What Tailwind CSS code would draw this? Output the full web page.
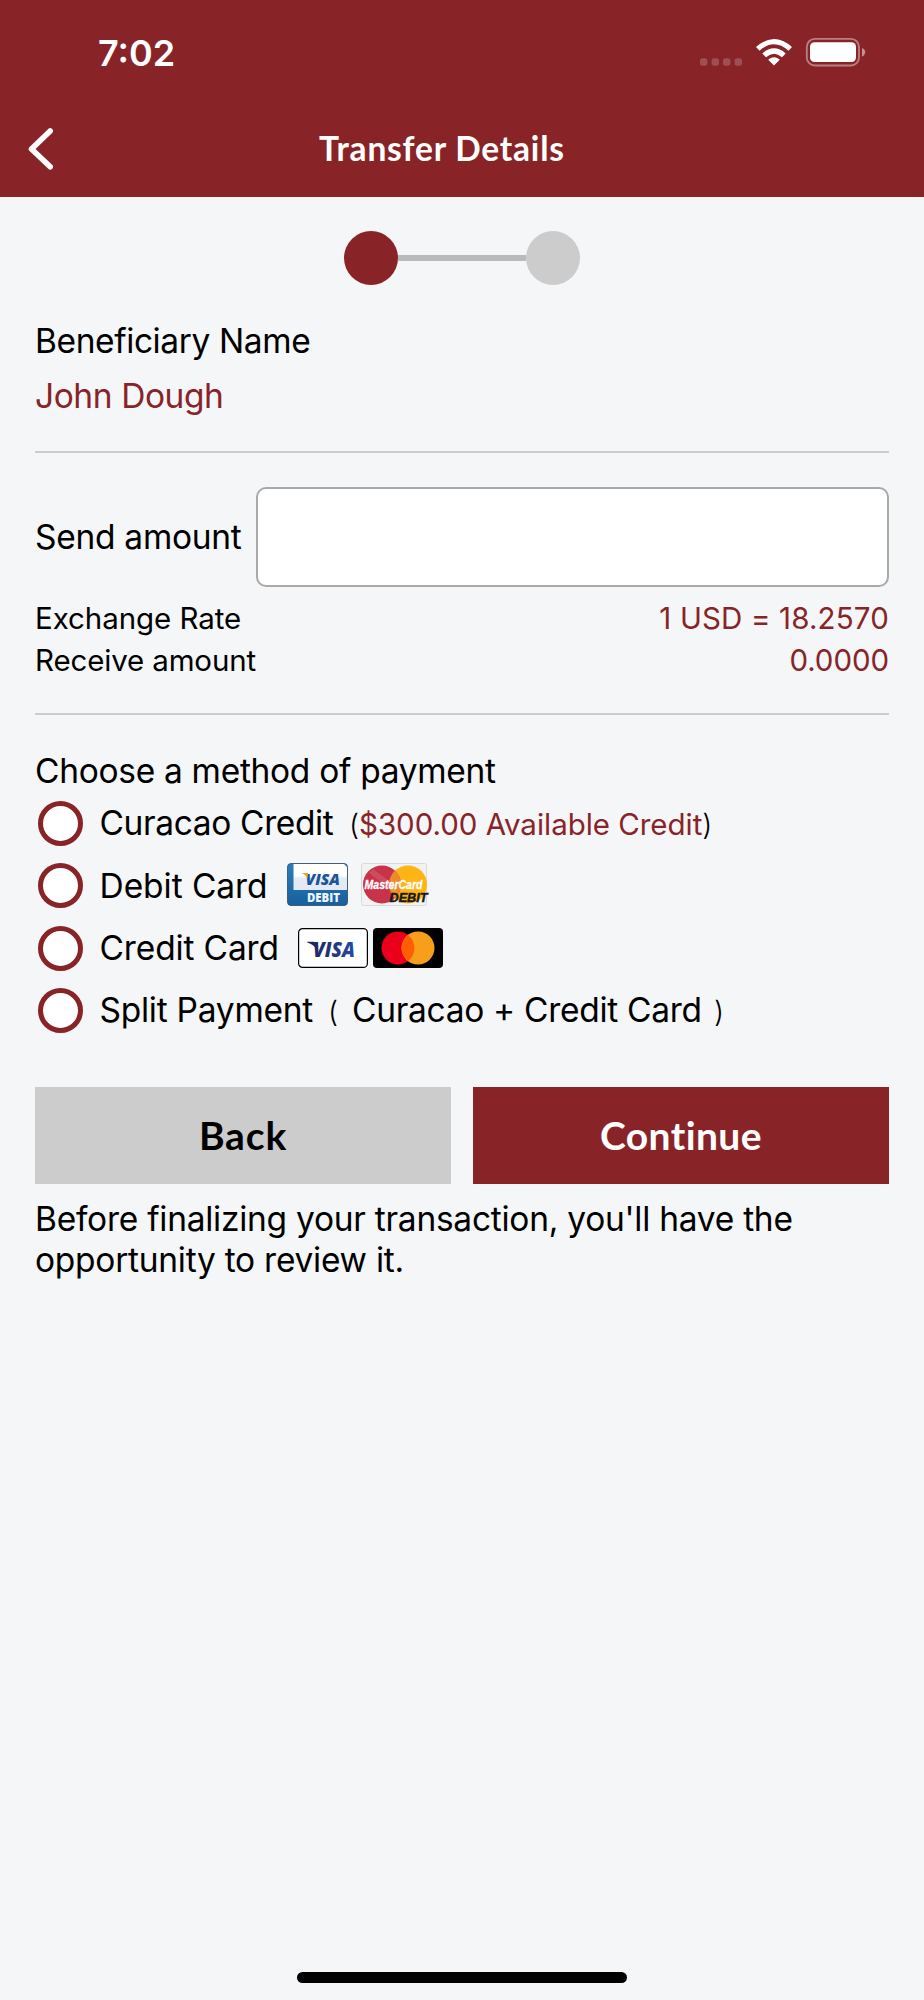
<!DOCTYPE html>
<html lang="en">
<head>
<meta charset="utf-8">
<title>Transfer Details</title>
<script src="https://cdn.jsdelivr.net/npm/@tailwindcss/browser@4"></script>
</head>
<body class="bg-[#f5f6f8] text-black font-['Inter',sans-serif] text-[33.5px] whitespace-nowrap">
<div class="w-[924px] h-[2000px] flex flex-col overflow-hidden">
  <header class="h-[197px] shrink-0 bg-[#882428] text-white">
    <div class="h-[106px] pl-[98px] pr-[58px] flex items-center justify-between">
      <span class="text-[36px] leading-[40px] font-semibold">7:02</span>
      <svg class="w-[166px] h-[30px] mt-[-2px]" viewBox="700 37 166 30" fill="#fff">
        <g fill-opacity=".2">
          <rect x="700" y="58.3" width="7.4" height="7.4" rx="2.6"/><rect x="711.6" y="58.3" width="7.4" height="7.4" rx="2.6"/><rect x="723" y="58.3" width="7.4" height="7.4" rx="2.6"/><rect x="734.6" y="58.3" width="7.4" height="7.4" rx="2.6"/>
        </g>
        <path d="M774 65.6L768.5 60Q768.2 59.4 769 58.9Q774 55.5 779 58.9Q779.8 59.4 779.5 60Z"/>
        <path d="M762.3 53.4Q774 43.2 785.7 53.4L782 57.2Q774 50.2 766 57.2Z"/>
        <path d="M756 47Q774 31 792 47L788.5 50.7Q774 37.8 759.5 50.7Z"/>
        <rect x="806.8" y="38.9" width="52.2" height="26.6" rx="8" fill="none" stroke="#fff" stroke-opacity=".42" stroke-width="1.8"/>
        <rect x="810" y="42.3" width="46" height="19.8" rx="4.5"/>
        <path d="M862 48Q865.2 49.5 865.2 52.3T862 56.8Z" fill-opacity=".5"/>
      </svg>
    </div>
    <div class="h-[83px] grid grid-cols-[319px_1fr] items-center">
      <svg class="ml-[26px] mt-[3px] w-[30px] h-[44px]" viewBox="26 127 30 44" fill="none" stroke="#fff" stroke-width="5.6" stroke-linecap="round" stroke-linejoin="round"><path d="M50.2 131L31.5 149L50.2 166.8"/></svg>
      <h1 class="font-['Lato',sans-serif] font-bold text-[33.5px] leading-[40px] tracking-[0.8px]">Transfer Details</h1>
    </div>
  </header>

  <main class="px-[35px] pt-[34px] flex flex-col">
    <div class="flex items-center justify-center h-[54px]">
      <div class="size-[54px] rounded-full bg-[#882428]"></div>
      <div class="w-[127.5px] h-[6px] bg-[#bababa]"></div>
      <div class="size-[54px] rounded-full bg-[#ccc]"></div>
    </div>

    <div class="mt-[29px] leading-[54px] tracking-[-0.4px]">Beneficiary Name</div>
    <div class="leading-[56px] tracking-[-0.42px] text-[#882428]">John Dough</div>
    <div class="mt-[27px] h-[2px] bg-[#ccc]"></div>

    <div class="mt-[34px] h-[100px] flex items-center">
      <label for="amt" class="w-[221px] tracking-[-0.28px]">Send amount</label>
      <input id="amt" class="flex-1 h-[100px] bg-white border-2 border-[#a9a9a9] rounded-[10px]">
    </div>
    <div class="mt-[10px] flex justify-between text-[29.5px] leading-[42px]">
      <span class="tracking-[-0.07px]">Exchange Rate</span><span class="text-[#882428] tracking-[0.15px]">1 USD = 18.2570</span>
    </div>
    <div class="flex justify-between text-[29.5px] leading-[42px]">
      <span class="tracking-[-0.15px]">Receive amount</span><span class="text-[#882428] tracking-[-0.08px]">0.0000</span>
    </div>
    <div class="mt-[32px] h-[2px] bg-[#ccc]"></div>

    <div class="mt-[35px] leading-[42px] tracking-[-0.3px]">Choose a method of payment</div>

    <div class="pl-[3px] flex flex-col leading-[42px]">
      <div class="h-[62.5px] flex items-center gap-[16.5px]">
        <div class="size-[45px] rounded-full border-5 border-[#882428] bg-white"></div>
        <div class="flex items-baseline pt-[1px]">
          <span class="w-[249.5px] tracking-[-0.37px]">Curacao Credit</span>
          <span class="text-[29.5px]"><span class="inline-block w-[10px] font-light text-[29px]">(</span><span class="text-[#882428] tracking-[-0.03px]">$300.00 Available Credit</span><span class="font-light text-[29px]">)</span></span>
        </div>
      </div>
      <div class="h-[62.5px] flex items-center gap-[16.5px]">
        <div class="size-[45px] rounded-full border-5 border-[#882428] bg-white"></div>
        <div class="flex items-center">
          <span class="w-[187.5px] tracking-[-0.05px]">Debit Card</span>
          <svg class="w-[142px] h-[43px] mt-[-3px] overflow-visible" viewBox="0 0 142 43">
            <defs>
              <linearGradient id="vd" x1="0" y1="0" x2="0" y2="1"><stop offset="0" stop-color="#2c7fb8"/><stop offset="1" stop-color="#16609f"/></linearGradient>
              <linearGradient id="vw" x1="0" y1="0" x2="0" y2="1"><stop offset=".45" stop-color="#fff"/><stop offset=".55" stop-color="#e3eaf4"/></linearGradient>
            </defs>
            <rect x=".5" y=".5" width="60" height="42" rx="3.5" fill="url(#vd)" stroke="#34495c" stroke-opacity=".8"/>
            <path d="M6.500 1H57L60 4V27H6.500Z" fill="url(#vw)"/>
            <text x="18.5" y="21.8" textLength="34.5" lengthAdjust="spacingAndGlyphs" font-family="Open Sans, sans-serif" font-weight="800" font-style="italic" font-size="16.5" fill="#1b5596">VISA</text>
            <path d="M14.500 10H21L20.500 15.500Q18 11 14.500 10Z" fill="#f3a51c"/>
            <text x="20" y="39" textLength="33" lengthAdjust="spacingAndGlyphs" font-family="Open Sans, sans-serif" font-weight="800" font-size="11.5" fill="#eef6fc">DEBIT</text>
            <rect x="74.5" y=".5" width="65" height="42" rx="2" fill="#f3f2f2" stroke="#d9d9d9"/>
            <circle cx="121" cy="21.5" r="19" fill="#fdb515"/>
            <circle cx="95" cy="21.5" r="19" fill="#c8334a"/>
            <path d="M108 7.600a19 19 0 0 1 0 27.800a19 19 0 0 1 0-27.800Z" fill="#ec8a2e"/>
            <path d="M86 6L110 24L108 30L82 10Z" fill="#fff" fill-opacity=".12"/>
            <text x="77.5" y="25.500" textLength="58" lengthAdjust="spacingAndGlyphs" font-family="Liberation Sans, sans-serif" font-weight="700" font-style="italic" font-size="13" fill="#fff" stroke="#fff" stroke-width=".3">MasterCard</text>
            <text x="102.5" y="38.5" textLength="38" lengthAdjust="spacingAndGlyphs" font-family="Liberation Sans, sans-serif" font-weight="700" font-style="italic" font-size="13.5" fill="#1a1a1a" stroke="#1a1a1a" stroke-width=".5">DEBIT</text>
          </svg>
        </div>
      </div>
      <div class="h-[62.5px] flex items-center gap-[16.5px]">
        <div class="size-[45px] rounded-full border-5 border-[#882428] bg-white"></div>
        <div class="flex items-center">
          <span class="w-[198.5px] tracking-[-0.14px]">Credit Card</span>
          <svg class="w-[145px] h-[40px]" viewBox="0 0 145 40">
            <defs><linearGradient id="v" x1="0" y1="0" x2="1" y2="0"><stop offset="0" stop-color="#20265f"/><stop offset="1" stop-color="#254aa5"/></linearGradient></defs>
            <rect x=".6" y=".6" width="68.8" height="38.8" rx="4" fill="#fff" stroke="#000" stroke-width="1.2"/>
            <path d="M9.300 13.800H15.500Q17.300 13.900 17.800 15.600L19.500 23Q16 16.200 9.300 14.400Z" fill="#20265f"/>
            <text x="15" y="28.5" textLength="42" lengthAdjust="spacingAndGlyphs" font-family="Open Sans, sans-serif" font-weight="800" font-style="italic" font-size="20.5" fill="url(#v)">VISA</text>
            <rect x="75" width="70" height="40" rx="4"/>
            <circle cx="100" cy="20" r="16.5" fill="#eb001b"/>
            <circle cx="120" cy="20" r="16.5" fill="#f79e1b"/>
            <path d="M110 6.900a16.500 16.500 0 0 1 0 26.200a16.500 16.500 0 0 1 0-26.200Z" fill="#ff5f00"/>
          </svg>
        </div>
      </div>
      <div class="h-[62.5px] flex items-center gap-[16.5px]">
        <div class="size-[45px] rounded-full border-5 border-[#882428] bg-white"></div>
        <div class="flex items-baseline pt-[1px]">
          <span class="w-[228.5px] tracking-[-0.25px]">Split Payment</span>
          <span class="w-[24px] font-light text-[29px]">(</span>
          <span class="w-[362px] tracking-[-0.3px]">Curacao + Credit Card</span>
          <span class="font-light text-[29px]">)</span>
        </div>
      </div>
    </div>

    <div class="mt-[45px] grid grid-cols-2 gap-[22px] font-['Lato',sans-serif] font-bold text-[39px]">
      <button class="h-[97px] pb-[1px] bg-[#ccc] tracking-[0.85px]">Back</button>
      <button class="h-[97px] pb-[1px] bg-[#882428] text-white tracking-[0.41px]">Continue</button>
    </div>
    <p class="mt-[15px] leading-[41px] tracking-[-0.26px]">Before finalizing your transaction, you'll have the<br>opportunity to review it.</p>
  </main>
  <div class="mt-auto mb-[17.5px] self-center w-[330px] h-[11px] shrink-0 rounded-full bg-black"></div>
</div>
</body>
</html>
